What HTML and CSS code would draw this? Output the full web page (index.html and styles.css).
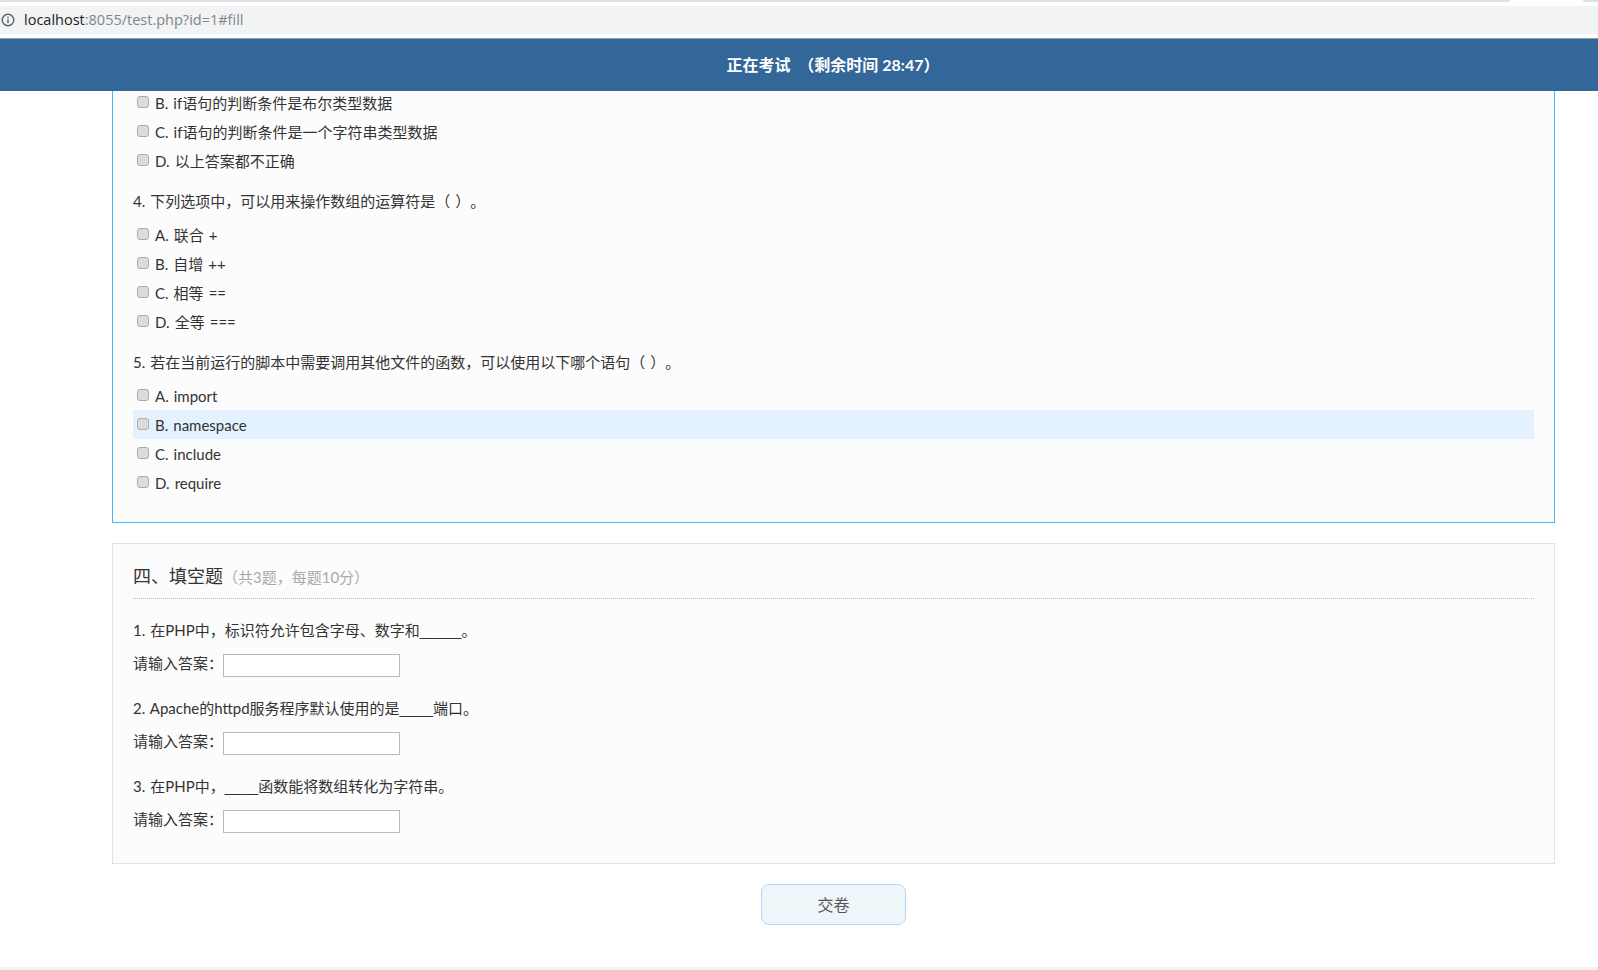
FILE: index.html
```html
<!DOCTYPE html>
<html lang="zh-CN">
<head>
<meta charset="utf-8">
<title>正在考试</title>
<link rel="stylesheet" href="styles.css">
</head>
<body>
<div class="tabstrip"><div class="tab-line main"></div><div class="tab-line end"></div></div>
<div class="addressbar">
  <svg class="info" width="14" height="14" viewBox="0 0 14 14"><circle cx="7" cy="7" r="5.8" fill="none" stroke="#5f6368" stroke-width="1.4"/><rect x="6.3" y="6" width="1.4" height="4.2" fill="#5f6368"/><rect x="6.3" y="3.7" width="1.4" height="1.4" fill="#5f6368"/></svg>
  <span class="url"><span class="host">localhost</span>:8055/test.php?id=1#fill</span>
</div>
<header class="topbar">正在考试 &nbsp;（剩余时间 28:47）</header>
<main class="content">
  <section class="panel active">
    <label class="opt"><input type="checkbox"><span>B. if语句的判断条件是布尔类型数据</span></label>
    <label class="opt"><input type="checkbox"><span>C. if语句的判断条件是一个字符串类型数据</span></label>
    <label class="opt"><input type="checkbox"><span>D. 以上答案都不正确</span></label>
    <p class="q">4. 下列选项中，可以用来操作数组的运算符是（ ）。</p>
    <label class="opt"><input type="checkbox"><span>A. 联合 +</span></label>
    <label class="opt"><input type="checkbox"><span>B. 自增 ++</span></label>
    <label class="opt"><input type="checkbox"><span>C. 相等 ==</span></label>
    <label class="opt"><input type="checkbox"><span>D. 全等 ===</span></label>
    <p class="q">5. 若在当前运行的脚本中需要调用其他文件的函数，可以使用以下哪个语句（ ）。</p>
    <label class="opt"><input type="checkbox"><span>A. import</span></label>
    <label class="opt hover"><input type="checkbox"><span>B. namespace</span></label>
    <label class="opt"><input type="checkbox"><span>C. include</span></label>
    <label class="opt"><input type="checkbox"><span>D. require</span></label>
  </section>
  <section class="panel fill">
    <h2 class="title">四、填空题<small>（共3题，每题10分）</small></h2>
    <div class="item">
      <p class="ftext">1. 在PHP中，标识符允许包含字母、数字和<span class="blank">_____</span>。</p>
      <label class="answer">请输入答案：<input type="text"></label>
    </div>
    <div class="item">
      <p class="ftext">2. Apache的httpd服务程序默认使用的是<span class="blank">____</span>端口。</p>
      <label class="answer">请输入答案：<input type="text"></label>
    </div>
    <div class="item">
      <p class="ftext">3. 在PHP中，<span class="blank">____</span>函数能将数组转化为字符串。</p>
      <label class="answer">请输入答案：<input type="text"></label>
    </div>
  </section>
  <div class="actions"><button class="submit" type="button">交卷</button></div>
</main>
<div class="bottomstrip"></div>
</body>
</html>
```
FILE: styles.css
```css
* { box-sizing: border-box; }
html, body { margin: 0; padding: 0; height: 970px; overflow: hidden; background: #fff; }
body { font-family: Lato, "Noto Sans CJK SC", sans-serif; color: #333; font-size: 15px; position: relative; text-spacing-trim: space-all; word-spacing: 1.2px; }
.tabstrip { height: 6px; display: flex; justify-content: space-between; align-items: flex-start; }
.tab-line { height: 2px; background: #dee1e6; }
.tab-line.main { width: 1510px; border-bottom-right-radius: 3px; }
.tab-line.end { width: 15px; border-bottom-left-radius: 3px; }
.addressbar { height: 28px; background: #f1f3f4; display: flex; align-items: center; padding-left: 1px; border-top-left-radius: 4px; border-bottom-left-radius: 4px; }
.info { margin-right: 9px; }
.url { font-family: "Open Sans", sans-serif; font-size: 14.5px; color: #80868b; position: relative; top: -1px; }
.host { color: #202124; }
.topbar { margin-top: 4px; height: 53px; background: #336699; border-top: 1px solid #9a9a9a; color: #fff; font-weight: 700; font-size: 16px; display: flex; align-items: center; justify-content: center; padding: 0 0 2px 68px; position: relative; z-index: 1; word-spacing: 0; }
.content { padding: 0 43px 0 112px; }
.panel { background: #fcfcfc; padding: 0 20px; }
.panel.active { border: 1px solid #45b6fa; border-top: 0; height: 435px; margin-top: -3px; }
.panel.fill { border: 1px solid #e2e2e2; margin-top: 20px; height: 321px; }
.opt { display: flex; align-items: center; height: 29px; }
.opt input { appearance: none; margin: 0 6px 2px 4px; width: 12px; height: 12px; flex: none; background: #dcdcdc; border: 1px solid #adadad; border-radius: 3px; }
.opt.hover { background: #e3f2fe; }
.q { margin: 14px 0 6px; height: 25px; line-height: 25px; }
.title { margin: 0 0 -2px; height: 55px; padding-top: 16px; line-height: 32px; font-size: 18px; font-weight: 400; border-bottom: 1px dotted #bbb; }
.title small { font-size: 15px; color: #aaa; }
.item { height: 78px; }
.ftext { margin: 0; padding-top: 20px; height: 53px; line-height: 26px; }
.blank { font-family: "Liberation Sans", sans-serif; }
.answer { display: flex; align-items: center; height: 25px; }
.answer input { width: 177px; height: 23px; border: 1px solid #bbb; background: #fff; padding: 0; margin: 6px 0 0; }
.actions { display: flex; justify-content: center; padding: 20px 0 0; }
.submit { width: 145px; height: 41px; padding: 0 0 2px; background: #eef6fa; border: 1px solid #b3d8ff; border-radius: 8px; color: #555; font-size: 16px; font-family: inherit; }
.bottomstrip { position: absolute; left: 0; right: 0; bottom: 0; height: 3px; background: #f2f2f2; }
```
